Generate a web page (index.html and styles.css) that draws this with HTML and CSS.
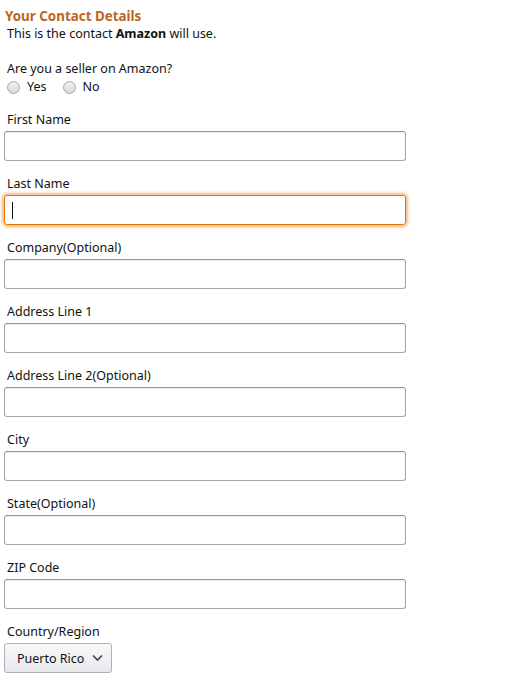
FILE: index.html
```html
<!DOCTYPE html>
<html>
<head>
<meta charset="utf-8">
<link rel="stylesheet" href="styles.css">
</head>
<body>
<div class="page">
  <h2 class="title">Your Contact Details</h2>
  <p class="intro">This is the contact <b>Amazon</b> will use.</p>
  <div class="seller">
    <div class="question">Are you a seller on Amazon?</div>
    <div class="radios">
      <label class="radio"><span class="dot"></span>Yes</label>
      <label class="radio"><span class="dot"></span>No</label>
    </div>
  </div>
  <div class="field"><div class="label">First Name</div><div class="input"></div></div>
  <div class="field"><div class="label">Last Name</div><div class="input focus"><span class="caret"></span></div></div>
  <div class="field"><div class="label">Company(Optional)</div><div class="input"></div></div>
  <div class="field"><div class="label">Address Line 1</div><div class="input"></div></div>
  <div class="field"><div class="label">Address Line 2(Optional)</div><div class="input"></div></div>
  <div class="field"><div class="label">City</div><div class="input"></div></div>
  <div class="field"><div class="label">State(Optional)</div><div class="input"></div></div>
  <div class="field"><div class="label">ZIP Code</div><div class="input"></div></div>
  <div class="field"><div class="label">Country/Region</div>
    <div class="select"><span>Puerto Rico</span>
      <svg class="chev" width="11" height="8" viewBox="0 0 11 8"><path d="M1 1.5 L5.5 6 L10 1.5" fill="none" stroke="#444" stroke-width="1.7"/></svg>
    </div>
  </div>
</div>
</body>
</html>
```
FILE: styles.css
```css
html, body { margin: 0; padding: 0; background: #fff; }
body { font-family: "Noto Sans", "Open Sans", sans-serif; font-size: 12.5px; color: #111; }
.page { padding: 7px 4px 0 4px; width: 402px; }
.title { margin: 0 0 0 1px; font-size: 13.4px; line-height: 18px; font-weight: bold; color: #c0651e; }
.intro { margin: 0 0 0 3px; line-height: 18px; }
.intro b { font-weight: bold; }
.seller { margin: 17px 0 0 3px; }
.question { line-height: 18px; }
.radios { display: flex; gap: 16px; line-height: 18px; }
.radio { display: flex; align-items: center; gap: 7px; }
.dot { border-radius: 50%; border: 1px solid #a9a9a9; background: linear-gradient(#f2f2f2, #d8d8d8); box-sizing: border-box; width: 13px; height: 13px; }
.seller + .field { margin-top: 13px; }
.field { margin-bottom: 12px; }
.label { margin-left: 3px; line-height: 19px; padding-top: 1px; margin-bottom: 2px; }
.input { height: 30px; box-sizing: border-box; border: 1px solid #a6a6a6; border-top-color: #949494; border-radius: 3px; box-shadow: 0 1px 0 rgba(255,255,255,.5), 0 1px 0 rgba(0,0,0,.07) inset; display: flex; align-items: center; padding-left: 7px; }
.input.focus { border-color: #e77600; box-shadow: 0 0 3px 2px rgba(228,121,17,.5); }
.caret { width: 1px; height: 17px; background: #111; }
.select { display: inline-flex; align-items: center; gap: 8px; height: 30px; box-sizing: border-box; border: 1px solid #adb1b8; border-radius: 3px; background: linear-gradient(#f7f8fa, #e7e9ec); padding: 0 8px 0 12px; }
.chev { display: block; }
```
